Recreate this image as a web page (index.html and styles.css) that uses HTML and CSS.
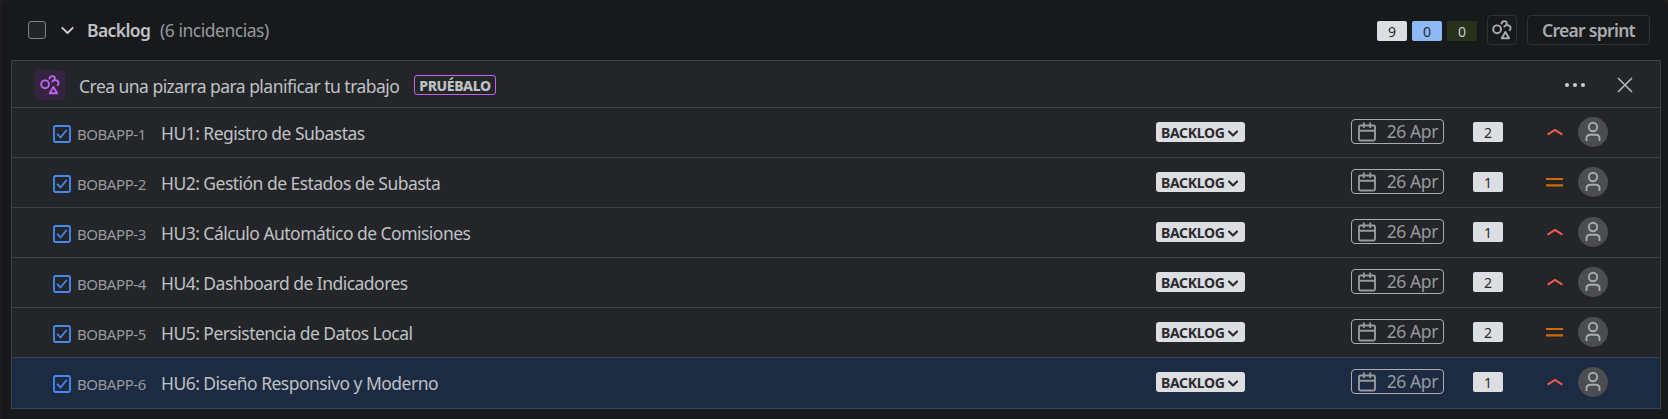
FILE: index.html
```html
<!DOCTYPE html>
<html lang="es">
<head>
<meta charset="utf-8">
<title>Backlog</title>
<link rel="stylesheet" href="styles.css">
</head>
<body>
<svg class="sprite" aria-hidden="true">
  <symbol id="shapes" viewBox="0 0 20 20">
    <g fill="none" stroke="currentColor" stroke-width="1.9" stroke-linecap="round" stroke-linejoin="round">
      <circle cx="5.1" cy="9.300" r="3.9"/>
      <path d="M9.500 3.600C9.800 2.100 10.900 1.100 12.300 1.100c1.500 0 2.500 1 2.500 2.200 0 1.300-.9 2.300-2.200 3M12.400 6.500c1-1 2.100-1.500 3.300-1.300 1.600.2 2.900 1.400 2.900 2.900 0 .8-.2 1.500-.9 2.100"/>
      <path d="M13.400 11.900l3.700 6.300H9.700z"/>
    </g>
  </symbol>
  <symbol id="task" viewBox="0 0 18 18">
    <rect x="1" y="1" width="16" height="16" rx="1.500" fill="none" stroke="currentColor" stroke-width="1.900"/>
    <path d="M4.600 9.300l2.900 3.200 5.800-7" fill="none" stroke="currentColor" stroke-width="1.800" stroke-linecap="round" stroke-linejoin="round"/>
  </symbol>
  <symbol id="calendar" viewBox="0 0 18 20">
    <g fill="none" stroke="currentColor" stroke-width="1.900">
      <rect x="1" y="3.500" width="16" height="15" rx="1.500"/>
      <path d="M1 8.700h16M5.800 .5v5.500M12.200 .5v5.500"/>
    </g>
  </symbol>
  <symbol id="high" viewBox="0 0 16 8">
    <path d="M.6 6.700L8 2l7.400 4.700" fill="none" stroke="currentColor" stroke-width="2"/>
  </symbol>
  <symbol id="medium" viewBox="0 0 17 10">
    <path d="M0 2h17M0 8.300h17" fill="none" stroke="currentColor" stroke-width="2.200"/>
  </symbol>
  <symbol id="person" viewBox="0 0 30 30">
    <g fill="none" stroke="currentColor" stroke-width="1.900">
      <circle cx="15" cy="10" r="4.200"/>
      <path d="M8.500 24v-2.500c0-2.200 1.500-3.700 3.700-3.700h5.600c2.200 0 3.700 1.500 3.700 3.700V24"/>
    </g>
  </symbol>
  <symbol id="chevron" viewBox="0 0 12 8">
    <path d="M1.200 1.500L6 6.300l4.800-4.800" fill="none" stroke="currentColor" stroke-linecap="round" stroke-linejoin="round"/>
  </symbol>
</svg>
<main class="backlog">
  <header class="header">
    <span class="checkbox"></span>
    <svg class="toggle"><use href="#chevron"/></svg>
    <h1 class="heading">Backlog</h1>
    <span class="total">(6 incidencias)</span>
    <div class="actions">
      <span class="count">9</span>
      <span class="count count-progress">0</span>
      <span class="count count-done">0</span>
      <button class="button button-icon"><svg class="shapes"><use href="#shapes"/></svg></button>
      <button class="button button-sprint"><span>Crear sprint</span></button>
    </div>
  </header>
  <section class="list">
    <div class="banner">
      <span class="banner-icon"><svg class="shapes"><use href="#shapes"/></svg></span>
      <span class="banner-text">Crea una pizarra para planificar tu trabajo</span>
      <span class="try">PRUÉBALO</span>
      <svg class="more" viewBox="0 0 20 4"><circle cx="2" cy="2" r="2"/><circle cx="10" cy="2" r="2"/><circle cx="18" cy="2" r="2"/></svg>
      <svg class="close" viewBox="0 0 16 16"><path d="M1 1l14 14M15 1L1 15"/></svg>
    </div>
    <div class="row">
      <svg class="task"><use href="#task"/></svg><span class="key">BOBAPP-1</span><span class="title">HU1: Registro de Subastas</span>
      <span class="status"><span>BACKLOG</span><svg class="caret"><use href="#chevron"/></svg></span>
      <span class="date"><svg class="calendar"><use href="#calendar"/></svg><span>26 Apr</span></span>
      <span class="count points">2</span>
      <span class="priority"><svg class="high"><use href="#high"/></svg></span>
      <svg class="avatar"><use href="#person"/></svg>
    </div>
    <div class="row">
      <svg class="task"><use href="#task"/></svg><span class="key">BOBAPP-2</span><span class="title">HU2: Gestión de Estados de Subasta</span>
      <span class="status"><span>BACKLOG</span><svg class="caret"><use href="#chevron"/></svg></span>
      <span class="date"><svg class="calendar"><use href="#calendar"/></svg><span>26 Apr</span></span>
      <span class="count points">1</span>
      <span class="priority"><svg class="medium"><use href="#medium"/></svg></span>
      <svg class="avatar"><use href="#person"/></svg>
    </div>
    <div class="row">
      <svg class="task"><use href="#task"/></svg><span class="key">BOBAPP-3</span><span class="title">HU3: Cálculo Automático de Comisiones</span>
      <span class="status"><span>BACKLOG</span><svg class="caret"><use href="#chevron"/></svg></span>
      <span class="date"><svg class="calendar"><use href="#calendar"/></svg><span>26 Apr</span></span>
      <span class="count points">1</span>
      <span class="priority"><svg class="high"><use href="#high"/></svg></span>
      <svg class="avatar"><use href="#person"/></svg>
    </div>
    <div class="row">
      <svg class="task"><use href="#task"/></svg><span class="key">BOBAPP-4</span><span class="title">HU4: Dashboard de Indicadores</span>
      <span class="status"><span>BACKLOG</span><svg class="caret"><use href="#chevron"/></svg></span>
      <span class="date"><svg class="calendar"><use href="#calendar"/></svg><span>26 Apr</span></span>
      <span class="count points">2</span>
      <span class="priority"><svg class="high"><use href="#high"/></svg></span>
      <svg class="avatar"><use href="#person"/></svg>
    </div>
    <div class="row before-selected">
      <svg class="task"><use href="#task"/></svg><span class="key">BOBAPP-5</span><span class="title">HU5: Persistencia de Datos Local</span>
      <span class="status"><span>BACKLOG</span><svg class="caret"><use href="#chevron"/></svg></span>
      <span class="date"><svg class="calendar"><use href="#calendar"/></svg><span>26 Apr</span></span>
      <span class="count points">2</span>
      <span class="priority"><svg class="medium"><use href="#medium"/></svg></span>
      <svg class="avatar"><use href="#person"/></svg>
    </div>
    <div class="row selected">
      <svg class="task"><use href="#task"/></svg><span class="key">BOBAPP-6</span><span class="title">HU6: Diseño Responsivo y Moderno</span>
      <span class="status"><span>BACKLOG</span><svg class="caret"><use href="#chevron"/></svg></span>
      <span class="date"><svg class="calendar"><use href="#calendar"/></svg><span>26 Apr</span></span>
      <span class="count points">1</span>
      <span class="priority"><svg class="high"><use href="#high"/></svg></span>
      <svg class="avatar"><use href="#person"/></svg>
    </div>
  </section>
</main>
</body>
</html>
```

FILE: styles.css
```css
* { box-sizing: border-box; }
body {
  margin: 0;
  height: 419px;
  overflow: hidden;
  background: #1f1f21;
  color: #bfc1c4;
  font-family: "Noto Sans", "Open Sans", sans-serif;
  font-size: 17.5px;
}
svg { display: block; flex: none; }
span, h1 { white-space: nowrap; }
.sprite { display: none; }
.backlog {
  height: 419px;
  margin-left: 1px;
  padding: 0 7px 0 10px;
  background: #18191a;
  border-radius: 8px 8px 0 0;
}
.header { display: flex; align-items: center; height: 60px; padding-left: 17px; }
.checkbox { width: 18px; height: 18px; border: 1px solid #7e8188; border-radius: 3px; background: #242528; }
.toggle { width: 13px; height: 9px; margin-left: 15px; stroke-width: 1.7; color: #cecfd2; }
.heading { width: 73px; margin: 0 0 0 13px; font-size: 17.5px; font-weight: 600; letter-spacing: -0.6px; line-height: 24px; }
.total { color: #96999e; letter-spacing: -0.47px; line-height: 24px; }
.actions { display: flex; align-items: center; margin-left: auto; padding-right: 11px; }
.count {
  width: 30px; height: 20px; margin: 2px 5px 0 0;
  border-radius: 2px; background: #dddee1; color: #292a2e;
  font-size: 14px; line-height: 21px; text-align: center;
}
.count-progress { background: #8fb8f6; }
.count-done { background: #28311b; color: #cecfd2; }
.button {
  display: flex; align-items: center; justify-content: center;
  height: 30px; padding: 0; border: 1px solid #303134; border-radius: 4px;
  background: none; color: #a9abaf; font: inherit;
}
.button-icon { width: 30px; margin-left: 5px; }
.button-sprint { width: 123px; margin-left: 10px; font-weight: 600; letter-spacing: -0.7px; }
.shapes { width: 20px; height: 20px; }
.list { border: 1px solid #3d3f43; border-bottom: 0; background: #242528; height: 349px; }
.banner { display: flex; align-items: center; height: 47px; padding: 0 27px 0 23px; border-bottom: 1px solid #3d3f43; }
.banner-icon { display: grid; place-items: center; width: 30px; height: 30px; margin-top: 2px; border-radius: 4px; background: #35243f; color: #bf63f3; }
.banner-text { width: 321px; margin: 4px 0 0 14px; letter-spacing: -0.53px; }
.try {
  width: 82px; height: 20px; margin: 2px 0 0 14px; border: 1px solid #bf63f3; border-radius: 3px;
  font-size: 14px; font-weight: 800; line-height: 20px; text-align: center; letter-spacing: -0.4px;
}
.more { width: 20px; height: 4px; margin: 2px 32px 0 auto; fill: #cecfd2; }
.close { width: 16px; height: 16px; margin-top: 2px; fill: none; stroke: #b4b6ba; stroke-width: 1.6; }
.row { display: flex; align-items: center; height: 50px; padding: 0 52px 1px 41px; border-bottom: 1px solid #3d3f43; }
.task { width: 18px; height: 18px; margin-top: 4px; color: #4688ec; }
.key { width: 78px; margin: 4px 0 0 6px; color: #96999e; font-size: 15px; letter-spacing: -0.45px; }
.title { flex: 1; margin: 2px 0 0 6px; letter-spacing: -0.53px; }
.status {
  display: flex; align-items: center; width: 89px; height: 20px; padding: 0 7px 0 5px;
  justify-content: space-between; border-radius: 3px; background: #dddee1; color: #292a2e;
  font-size: 14px; font-weight: 700; line-height: 21px; letter-spacing: -0.3px;
}
.caret { width: 10px; height: 7px; margin-top: 3px; stroke-width: 2.600; }
.date {
  display: flex; align-items: center; justify-content: space-between; width: 93px; height: 25px;
  margin: 0 0 1px 106px; padding: 0 5px 0 6px; border: 1px solid #a9abaf; border-radius: 4px; color: #96999e;
  line-height: 27px; letter-spacing: -0.4px;
}
.calendar { width: 18px; height: 20px; }
.points { margin: 0 0 0 29px; }
.priority { display: grid; place-items: center; width: 17px; margin-left: 43px; }
.high { width: 16px; height: 8px; color: #f15b50; }
.medium { width: 17px; height: 10px; color: #cf6b05; }
.avatar { width: 30px; height: 30px; margin-left: 15px; border-radius: 50%; background: #4b4d51; color: #a9abaf; }
.before-selected { border-bottom-color: #2f4562; }
.selected { height: 51px; padding-bottom: 2px; background: #1c2b42; border-bottom-color: #2f4562; }
```
